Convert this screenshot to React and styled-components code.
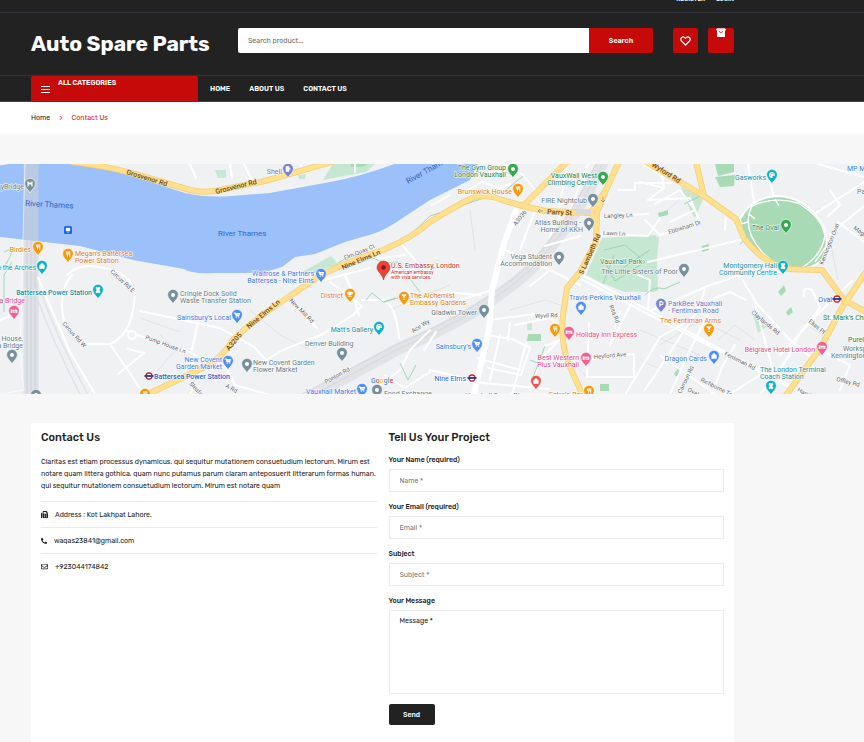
import React from "react";
import styled, { createGlobalStyle } from "styled-components";
import { FaFax, FaPhoneAlt, FaRegEnvelope } from "react-icons/fa";

const ink = "#222222";
const red = "#c60a0a";
const line = "#ebebeb";

const GlobalStyle = createGlobalStyle`
  *, *::before, *::after { box-sizing: border-box; }
  html { background: #f7f7f7; overflow: hidden; }
  body { margin: 0; font: 400 7px/12px Rubik, Inter, "Liberation Sans", sans-serif; color: ${ink}; }
  a { color: inherit; text-decoration: none; }
  h1, h2, p, ul { margin: 0; padding: 0; }
  ul { list-style: none; }
  button, input, textarea { font: inherit; }
`;

const Container = styled.div`
  margin: 0 130px 0 31px;
`;

const Header = styled.header`
  background: ${ink};
  color: #fff;
  border-bottom: 1px solid ${red};
`;

const TopBar = styled.div`
  height: 13px;
  overflow: hidden;
  border-bottom: 1px solid #32323f;
`;

const TopLinks = styled(Container)`
  display: flex;
  justify-content: flex-end;
  gap: 11px;
  margin-top: -14px;
  line-height: 26px;
  font-size: 6px;
  font-weight: 500;
`;

const Brand = styled(Container)`
  display: grid;
  grid-template-columns: 207px 1fr auto;
  align-items: start;
  height: 62px;
  padding-top: 15px;
`;

const Logo = styled.h1`
  font-size: 21px;
  line-height: 32px;
  font-weight: 700;
  white-space: nowrap;
`;

const SearchForm = styled.form`
  display: flex;
  height: 25px;
  margin-right: 20px;
  border-radius: 2px;
  overflow: hidden;
`;

const BrandActions = styled.div`
  display: flex;
  gap: 10px;
`;

const SearchInput = styled.input`
  flex: 1;
  min-width: 0;
  border: 0;
  padding: 0 10px;
  background: #fff;
  color: ${ink};
  &::placeholder { color: #6c6c6c; opacity: 1; }
`;

const SearchButton = styled.button`
  width: 64px;
  border: 0;
  background: ${red};
  color: #fff;
  font-weight: 600;
`;

const IconButton = styled.button`
  display: flex;
  justify-content: center;
  align-items: ${(p) => (p.$top ? "flex-start" : "center")};
  height: 25px;
  width: ${(p) => (p.$top ? "26px" : "25px")};
  padding: 0;
  border: 0;
  border-radius: 2px;
  background: ${red};
  color: #fff;
`;

const NavBar = styled.div`
  border-top: 1px solid #32323f;
`;

const NavInner = styled(Container)`
  display: flex;
  align-items: stretch;
  height: 25px;
`;

const Categories = styled.button`
  display: flex;
  align-items: flex-start;
  gap: 8px;
  width: 167px;
  padding: 0 10px;
  border: 0;
  border-radius: 2px 2px 0 0;
  background: ${red};
  color: #fff;
  font-weight: 600;
  line-height: 14px;
  svg { margin-top: 10px; }
`;

const Menu = styled.nav`
  display: flex;
  align-items: center;
  gap: 19px;
  padding-left: 12px;
  font-weight: 600;
`;

const Breadcrumb = styled.nav`
  background: #fff;
  height: 32px;
`;

const Crumbs = styled(Container)`
  display: flex;
  align-items: center;
  gap: 9px;
  height: 32px;
`;

const Accent = styled.span`
  color: #cf1f1f;
`;

const MapFrame = styled.div`
  margin: 30px 0 29px;
  height: 230px;
  svg { display: block; width: 100%; height: 100%; }
`;

const Card = styled.main`
  display: grid;
  grid-template-columns: 1fr 1fr;
  gap: 12px;
  margin: 0 130px 0 31px;
  padding: 7px 10px 24px;
  background: #fff;
`;

const Title = styled.h2`
  margin-bottom: ${(p) => (p.$tight ? "9px" : "10px")};
  font-size: 11px;
  line-height: 16px;
  font-weight: 500;
`;

const Intro = styled.p`
  margin-bottom: 9px;
`;

const ContactRow = styled.li`
  display: flex;
  align-items: center;
  gap: 7px;
  height: 26px;
  border-top: 1px solid ${line};
`;

const Field = styled.div`
  display: flex;
  flex-direction: column;
  gap: 4px;
  margin-bottom: 10px;
`;

const Label = styled.label`
  line-height: 10px;
  font-weight: 500;
`;

const TextInput = styled.input`
  height: 23px;
  border: 1px solid ${line};
  padding: 0 10px;
  color: ${ink};
  &::placeholder { color: #777; opacity: 1; }
`;

const MessageBox = styled.textarea`
  height: 84px;
  border: 1px solid ${line};
  padding: 4px 10px;
  resize: none;
  color: ${ink};
  &::placeholder { color: ${ink}; opacity: 1; }
`;

const SendButton = styled.button`
  width: 46px;
  height: 21px;
  border: 0;
  border-radius: 2px;
  background: ${ink};
  color: #fff;
  font-weight: 500;
`;

const MapText = styled.text`
  font-family: Roboto, sans-serif;
  font-size: ${(p) => p.$size || 7}px;
  font-weight: ${(p) => p.$weight || 400};
  fill: ${(p) => p.$color};
  stroke: #fff;
  stroke-width: ${(p) => (p.$plain ? 0 : 1)}px;
  paint-order: stroke;
`;

const gray = "#647985";
const orange = "#e27d10";
const blue = "#3b78e7";
const teal = "#12909e";
const pink = "#e8467f";
const green = "#188044";
const violet = "#6b73c4";

const pinFill = {
  gray: "#78909c",
  orange: "#f59a0c",
  blue: "#4f8ff5",
  teal: "#12b0c4",
  pink: "#f06292",
  green: "#34a853",
  violet: "#7b83cf",
  coral: "#ef5350",
};

const glyphs = {
  dot: <circle r="2" fill="#fff" />,
  fork: <path d="M-1.6-2.6v2q.1 1 1 1v2.4M-.6-2.6v3M.4-2.6v2q0 1-1 1M1.8 2.8v-5.4q-1.2 1-.9 3h.9" fill="none" stroke="#fff" strokeWidth=".8" />,
  cart: <path d="M-3-2h1.2l.9 3h2.6l.8-2.4h-3.8l.8 1.400h2.400M-.8 2.3h.1M1.7 2.3h.1" fill="none" stroke="#fff" strokeWidth="1.1" strokeLinecap="round" />,
  bag: <path d="M-2.3-.8h4.6v3.3h-4.6zM-1.2-.8v-1q1.2-1.4 2.4 0v1" fill="#fff" stroke="#fff" strokeWidth=".6" />,
  bed: <path d="M-2.8-1.8v3.8M-2.8 1h5.6v1M-1.8-.6h4.6v1.4" fill="none" stroke="#fff" strokeWidth="1.1" />,
  glass: <path d="M-2.3-2.3h4.6L0 .2zM0 0v2.3M-1.3 2.5h2.6" fill="#fff" stroke="#fff" strokeWidth=".7" />,
  cup: <path d="M-2.3-2h4v2q-2 2.5-4 0zM1.7-1.5h1v1h-1M-2.4 2.3h4.4" fill="#fff" stroke="#fff" strokeWidth=".7" />,
  column: <path d="M-2-2.6h4v1.2L1 0l1 1.2v1.5h-4V1.2L-1 0l-1-1.1z" fill="#fff" stroke="#fff" strokeWidth=".4" />,
  palette: (
    <g>
      <path d="M0-2.900A2.900 2.900 0 1 0 0 2.900Q1 2.600.5 1.500Q.6.8 1.400 1H2.400Q3 .8 2.900 0A2.900 2.900 0 0 0 0-2.900" fill="#fff" />
      <path d="M-1.500 0h.1M-.8-1.500h.1M.9-1.500h.1M1.700-.1h.1" stroke="#12b0c4" strokeWidth=".9" strokeLinecap="round" />
    </g>
  ),
  parking: <path d="M-1.1 2.8v-5.2h1.5q1.6.2 1.6 1.6T.4.8h-1.5" fill="none" stroke="#fff" strokeWidth="1.1" />,
  fuel: <path d="M-2 2.5v-5h3v5zM1-1h1v2.5" fill="#fff" stroke="#fff" strokeWidth=".6" />,
  bridge: <path d="M-2-2.5v5M2-2.5v5M-2 .3q2-1.4 4 0M-2-1h4" fill="none" stroke="#fff" strokeWidth="1.2" />,
};

const pins = [
  [30, 185, "gray", "bridge"], [38, 248, "orange", "fork"], [68, 255, "orange", "fork"],
  [42, 267, "teal", "bag"], [98, 291, "teal", "column"], [14, 312, "pink", "bed"],
  [12, 356, "gray", "dot"], [36, 396, "gray", "dot"], [173, 296, "gray", "dot"],
  [237, 316, "blue", "cart"], [228, 362, "blue", "cart"], [247, 365, "gray", "dot"],
  [145, 395, "orange", "fork"], [288, 170, "violet", "fuel"], [321, 275, "blue", "cart"],
  [350, 295, "orange", "cup"], [404, 298, "orange", "glass"], [379, 328, "teal", "palette"],
  [342, 354, "gray", "dot"], [362, 390, "blue", "cart"], [377, 391, "gray", "dot"],
  [513, 170, "green", "dot"], [518, 190, "orange", "fork"], [603, 178, "green", "dot"],
  [593, 200, "gray", "dot"], [589, 224, "gray", "dot"], [559, 258, "gray", "dot"],
  [484, 311, "gray", "dot"], [477, 345, "blue", "cart"], [581, 308, "blue", "bag"],
  [555, 330, "orange", "fork"], [569, 333, "pink", "bed"], [586, 359, "pink", "bed"],
  [536, 382, "coral", "bag"], [589, 392, "orange", "fork"], [684, 270, "gray", "dot"],
  [661, 305, "violet", "parking"], [709, 330, "orange", "glass"], [714, 357, "blue", "bag"],
  [772, 176, "teal", "palette"], [786, 226, "green", "dot"], [783, 267, "teal", "column"],
  [822, 348, "pink", "bed"], [771, 387, "teal", "column"],
];

const labels = [
  [24, 189, "yBridge", gray, "end"], [25, 206, "River Thames", "#2f66c4", "start", 3, 8],
  [218, 236, "River Thames", "#2f66c4", "start", 0, 8], [408, 184, "River Thames", "#2f66c4", "start", -29, 8],
  [31, 252, "Birdies", orange, "end"], [75, 256, "Megan's Battersea", orange], [75, 263, "Power Station", orange],
  [36, 270, "n the Arches", teal, "end"], [92, 295, "Battersea Power Station", teal, "end"],
  [25, 303, "ea Bridge", pink, "end"], [23, 341, "House,", gray, "end"], [23, 348, "a Bridge", gray, "end"],
  [180, 296, "Cringle Dock Solid", gray], [180, 303, "Waste Transfer Station", gray],
  [231, 320, "Sainsbury's Local", blue, "end"], [222, 362, "New Covent", blue, "end"],
  [222, 369, "Garden Market", blue, "end"], [154, 379, "Battersea Power Station", "#2562cc"],
  [253, 365, "New Covent Garden", gray], [253, 372, "Flower Market", gray],
  [282, 174, "Shell", violet, "end"], [314, 276, "Waitrose & Partners", blue, "end"],
  [314, 283, "Battersea - Nine Elms", blue, "end"], [343, 298, "District", orange, "end"],
  [391, 268, "U.S. Embassy, London", "#c52d25"], [391, 274, "American embassy", "#c52d25", "start", 0, 5],
  [391, 279, "with visa services", "#c52d25", "start", 0, 5],
  [410, 298, "The Alchemist", orange], [410, 305, "Embassy Gardens", orange], [373, 332, "Matt's Gallery", teal, "end"],
  [305, 346, "Denver Building", gray], [356, 394, "Vauxhall Market", blue, "end"], [384, 396, "Food Exchange", gray],
  [506, 170, "The Gym Group", green, "end"], [506, 177, "London Vauxhall", green, "end"],
  [512, 194, "Brunswick House", orange, "end"], [597, 178, "VauxWall West", green, "end"],
  [597, 185, "Climbing Centre", green, "end"], [587, 203, "FIRE Nightclub", gray, "end"],
  [581, 225, "Atlas Building -", gray, "end"], [583, 232, "Home of KKH", gray, "end"],
  [552, 259, "Vega Student", gray, "end"], [552, 266, "Accommodation", gray, "end"],
  [477, 315, "Gladwin Tower", gray, "end"], [471, 349, "Sainsbury's", blue, "end"], [466, 381, "Nine Elms", "#2562cc", "end"],
  [569, 300, "Travis Perkins Vauxhall", blue], [576, 337, "Holiday Inn Express", pink],
  [579, 360, "Best Western", pink, "end"], [579, 367, "Plus Vauxhall", pink, "end"],
  [549, 397, "Estrela Bar", orange], [545, 398, "Vauxhall Super Pharmacy", "#df4a43", "end"], [600, 264, "Vauxhall Park", "#2d8657"],
  [678, 274, "The Little Sisters of Poor", gray, "end"], [668, 306, "ParkBee Vauxhall", violet],
  [668, 313, "- Fentiman Road", violet], [660, 323, "The Fentiman Arms", orange], [707, 361, "Dragon Cards", blue, "end"],
  [766, 180, "Gasworks", teal, "end"], [779, 230, "The Oval", green, "end"], [847, 171, "MP Moran", blue],
  [777, 268, "Montgomery Hall", teal, "end"], [777, 275, "Community Centre", teal, "end"],
  [857, 194, "Park", gray], [832, 302, "Oval", "#2562cc", "end"], [823, 320, "St. Mark's Church", green],
  [848, 342, "PureGym", green], [843, 351, "Workspace", gray], [831, 358, "Kennington Park", gray],
  [815, 352, "Belgrave Hotel London", pink, "end"], [760, 372, "The London Terminal", teal], [760, 379, "Coach Station", teal],
];

const roadNames = [
  [126, 174, "Grosvenor Rd", 17, 1], [216, 194, "Grosvenor Rd", -14, 1], [343, 270, "Nine Elms Ln", -23, 1],
  [249, 329, "Nine Elms Ln", -40, 1], [229, 351, "A3205", -50, 1], [547, 214, "Parry St", 3, 1],
  [583, 275, "S Lambeth Rd", -66, 1], [651, 166, "Wyford Rd", 32, 1], [516, 226, "A3036", -51], [345, 260, "Elm Quay Ct", -22],
  [289, 301, "New Mill Rd", 45], [145, 339, "Pump House Ln", 20], [62, 324, "Circus Rd W", 48], [110, 272, "Circus Rd E", 43],
  [326, 384, "Ponton Rd", -29], [413, 333, "Ace Wy", -32], [535, 318, "Wyvil Rd", -2], [604, 218, "Langley Ln", -2],
  [603, 235, "Lawn Ln", 2], [669, 234, "Ebbisham Dr", -17], [594, 359, "Heyford Ave", -5], [724, 355, "Fentiman Rd", 27],
  [751, 313, "Claylands Rd", 40], [808, 322, "Elias Pl", 39], [700, 381, "Richborne Ter", 27], [681, 394, "Carroun Rd", -64],
  [836, 381, "Offley Rd", 14], [225, 387, "A Rd", 30], [823, 265, "Kennington Oval", -68], [853, 229, "Magee St", 35],
  [609, 306, "Rita Rd", 68], [797, 391, "Handforth Rd", 28], [189, 384, "Sleaford St", 47], [687, 391, "Oval Pl", 27],
];

const majorRoads = [
  "M72 162Q107 166 135 174L190 190Q207 194 225 189L265 181L335 161",
  "M140 398L205 367Q222 358 233 340Q257 317 290 296L318 277Q345 262 383 250Q410 239 430 222Q450 209 474 197Q488 194 502 200L523 206L545 211L592 213",
  "M523 206L545 184L567 162",
  "M619 162L606 190L597 212L596 242L580 272L567 288L563 315Q560 344 570 367L584 398",
  "M606 190L591 212L597 225",
  "M646 162L704 196L736 219L744 238Q760 260 785 269L822 270L844 300L868 313",
  "M696 162L704 196",
  "M868 269L843 306L821 347L784 398",
];

const wideRoads = [
  "M516 211L504 243L492 290L489 330L473 398",
  "M0 394L24 390L20 350L25 162",
];

const minorRoads = [
  "M67 275Q80 263 98 267Q142 272 133 310Q128 337 110 344H87Q62 335 62 305Q62 285 72 275",
  "M110 344L144 394M125 330L140 336L190 352L206 362M198 322L192 350M140 311L220 328L254 347L266 360L283 350L323 334L353 315L362 306L330 282",
  "M287 295L317 328L306 319M362 300H382Q396 303 399 338M345 275L352 290L359 315M398 240L415 260M420 300L445 292L481 295",
  "M320 281L370 268M375 259L405 255M430 330L410 350L400 370L380 385M436 332L424 350M385 375L405 388L430 372",
  "M235 337L222 360L235 385L270 395M205 362L190 394M38 278L70 352L95 394M128 349L144 353L118 374",
  "M489 320L535 314L562 315M486 335L512 339L530 348L521 375L488 368M477 358L520 370M460 381L548 389M510 323L508 340M562 337L540 360L530 390",
  "M526 344L512 395M500 335L490 380M515 325L550 318L559 326M492 290L460 300M545 346L560 340M432 205L450 195M430 370L480 382",
  "M505 250L550 270L580 285M550 270L530 286M535 210L520 250M549 237L562 213M545 246L580 236M618 190H635V183H674M601 218L625 215L648 214M601 234L648 236L660 218",
  "M579 278L864 426M582 275L650 311L735 357L800 390M589 323L587 377H634V354L592 359M650 311L708 286L740 275L800 270M645 390L698 310L706 286",
  "M733 264L757 304L790 340L814 360M755 304L775 378M740 240L648 262M648 200L690 198L700 222L660 235L645 220M706 196L726 215L725 230",
  "M660 164L664 188L648 200M640 182L664 188M748 164L754 202L738 220M771 185L774 198M816 213L864 182M830 234L864 206M838 222L864 242",
  "M780 355L820 312L852 281M790 355L760 395M830 318H864M820 350L850 365L840 390M804 296Q802 286 812 290L820 308L802 330L783 365",
  "M714 302L690 350L670 394M735 345L722 367L712 394M661 356L715 394M625 395L660 337L685 323M730 394L760 375M746 300L730 292L710 300",
  "M570 210L588 164M558 211L568 164M500 162L523 175L535 190M482 182L500 188L510 184M468 190L482 182M620 312L610 345M635 296L610 345",
  "M645 165L664 178M818 164L864 177M830 190L840 205L828 216M655 204L680 190L695 210L670 222M638 275L650 280L648 310",
  "M110 164V167M190 164L196 178M230 164L232 178M244 164L252 181M300 164L303 170M355 164V172M0 320L20 312",
];

const parks = [
  "M602 238L656 235L658 291L625 292L602 283L586 275Z",
  "M302 272L331 256L338 264L309 275Z M323 180L334 162L375 164L366 172Z",
  "M681 187L704 197L695 218L690 210Z M644 236L659 237L657 260L642 275Z M644 275L658 279L655 292H640Z",
  "M753 314L768 326L758 333Z",
  "M298 175L306 174L305 179H299Z M215 170H226V178H218Z M527 323H532V330H527Z",
];

const footpaths = [
  "M338 263L350 256L375 253L405 240L430 216L478 200L505 191L523 176",
  "M365 255L385 263L398 262M404 271L420 292M384 302L396 298M366 300L372 293L383 302L398 298",
  "M604 250L625 245L645 262L615 281L604 260M620 270L650 250M614 255L603 284",
  "M4 252Q18 244 6 264L-2 270M4 275V312M12 262L4 275M645 295Q655 285 664 289L680 282",
  "M545 346L532 380M530 360L538 363M400 363L408 380M416 365L408 380M684 204L700 196M740 244L745 240",
];

const Pin = ({ x, y, tone, icon }) => (
  <g transform={`translate(${x} ${y - 1})`}>
    <path d="M0 9C-.6 6.5-5.4 3.8-5.4-.3A5.4 5.4 0 0 1 5.4-.3C5.4 3.8.6 6.5 0 9Z" fill={pinFill[tone]} stroke="#fff" strokeWidth=".6" />
    {glyphs[icon]}
  </g>
);

const Roundel = ({ x, y }) => (
  <g transform={`translate(${x} ${y})`}>
    <circle r="3" fill="#fff" stroke="#d5202c" strokeWidth="1.3" />
    <path d="M-4.5 0h9" stroke="#173a9e" strokeWidth="1.8" />
  </g>
);

const LocationMap = () => (
  <svg viewBox="0 164 864 230" preserveAspectRatio="xMidYMid slice" role="img" aria-label="Map of Nine Elms, London">
    <rect x="-100" y="100" width="1100" height="400" fill="#eff1f3" />
    <path d="M-2 166Q12 163 30 162L70 164Q108 168 135 177L185 193Q206 198 232 196L270 193L330 182Q360 177 400 162H479L470 180Q450 190 430 200L395 223Q380 233 362 237L345 242L315 254L295 257L282 267Q265 273 245 273H215Q190 274 184 269L133 260L80 246L0 237Z" fill="#9cc0f9" />
    {parks.map((d) => <path key={d} d={d} fill="#c6e7d1" />)}
    <path d="M350 162H372L362 167H351ZM715 177L735 175L734 186L720 187ZM715 164H734V172L718 176ZM528 334H541V341H527ZM778 292L784 285L786 291L781 296ZM786 312L791 307L793 312L788 316ZM674 374L679 367L681 370L677 377ZM600 384H609V391H600ZM658 213L668 210V215L659 217ZM702 246L709 244V250L702 252Z" fill="#a8dab5" />
    <g fill="none" stroke="#e1e3e6">
      <path d="M308 398L400 348Q480 315 530 270Q570 230 603 162" strokeWidth="12" />
      <path d="M31 162V398" strokeWidth="15" stroke="#ced3d9" opacity=".55" />
      <path d="M34 290Q54 345 82 398M40 290Q60 345 90 398" strokeWidth="1.500" />
      <path d="M27 162V398M31 162V398M35 162V398" stroke="#c5cad0" strokeWidth=".7" opacity=".8" />
      <path d="M308 398L400 348Q480 315 530 270Q570 230 603 162M302 394L398 344Q477 311 526 268Q566 228 597 162" stroke="#d0d3d7" strokeWidth=".7" />
      <path d="M250 310L280 335L310 350M470 210L475 250M390 310L450 285M510 310L545 300L560 305M660 345L700 320L740 340M640 330L700 355M830 240L838 280M668 210L685 195M800 320L830 340M640 360L662 370M160 335L176 350L158 370M140 318L180 332M570 360L590 380M500 170L515 176M755 340L735 325L718 340" strokeWidth="1" />
    </g>
    <g fill="none" stroke="#fff" strokeLinecap="round" strokeLinejoin="round">
      {minorRoads.map((d) => <path key={d} d={d} strokeWidth="2" />)}
      {wideRoads.map((d, i) => <path key={d} d={d} strokeWidth={i ? 1 : 6} opacity={i ? 0.6 : 1} />)}
      <circle cx="132" cy="335" r="4" strokeWidth="2" fill="#eff1f3" />
    </g>
    <path d="M740 219Q752 197 777 196Q805 197 821 222Q832 241 822 260Q810 272 785 268Q752 254 742 232Z" fill="#a8dab5" stroke="#fff" strokeWidth="2" />
    <path d="M752 206Q774 196 798 203Q822 217 825 236Q821 257 801 268Q779 270 762 252Q741 228 752 206M748 213L755 219M741 224L748 222M815 262L827 245M775 199L779 206" fill="none" stroke="#fff" strokeWidth="1.4" />
    <g fill="none" stroke="#8fcfaa" strokeWidth=".8">{footpaths.map((d) => <path key={d} d={d} />)}</g>
    <g fill="none" strokeLinejoin="round">
      {majorRoads.map((d) => <path key={d} d={d} stroke="#f6cd72" strokeWidth="6" />)}
      {majorRoads.map((d) => <path key={d} d={d} stroke="#fee08f" strokeWidth="4.6" />)}
    </g>
    <path d="M576 212H591" stroke="#d7d9db" strokeWidth="5" />
    <path d="M538 211h5M540 209l-2 2 2 2M603 197v5M601 200l2 2 2-2" stroke="#777" strokeWidth=".6" fill="none" />
    {roadNames.map(([x, y, text, angle, strong]) => (
      <MapText key={`${text}${x}`} x={x} y={y} transform={`rotate(${angle} ${x} ${y})`} $color={strong ? "#6b4718" : "#5c6268"} $size={strong ? 7 : 6} $weight={strong ? 500 : 400} $plain={strong}>{text}</MapText>
    ))}
    {labels.map(([x, y, text, color, anchor = "start", angle = 0, size = 7]) => (
      <MapText key={`${text}${x}`} x={x} y={y} textAnchor={anchor} transform={`rotate(${angle} ${x} ${y})`} $color={color} $size={size} $weight={text === "Battersea Power Station" ? 500 : 400} $plain={size === 8}>{text}</MapText>
    ))}
    {pins.map(([x, y, tone, icon]) => <Pin key={`${x}-${y}`} x={x} y={y} tone={tone} icon={icon} />)}
    <Roundel x={149} y={376} />
    <Roundel x={472} y={378} />
    <Roundel x={837} y={299} />
    <rect x="64" y="226" width="8" height="8" rx="1.5" fill="#1a66dc" />
    <path d="M66.2 228h3.6v3h-3.6zM67 232.3h2" fill="#fff" stroke="#fff" strokeWidth=".5" />
    <path d="M383.500 280C382.500 274 377 272 377 267.500A6.500 6.500 0 0 1 390 267.500C390 272 384.500 274 383.500 280Z" fill="#ea4335" stroke="#c5221f" strokeWidth=".5" />
    <circle cx="383.500" cy="267.500" r="2.300" fill="#8c1810" />
    <MapText x="371" y="383" $size={7} $weight={500} $color="#4285f4">
      G<tspan fill="#ea4335">o</tspan><tspan fill="#fbbc04">o</tspan>g<tspan fill="#34a853">l</tspan><tspan fill="#ea4335">e</tspan>
    </MapText>
  </svg>
);

const HeartIcon = () => (
  <svg width="11" height="10" viewBox="0 0 11 10" aria-hidden="true">
    <path d="M5.500 9L1.500 5Q.2 3.200 1.400 1.700Q3.500-.1 5.500 2.200Q7.500-.1 9.600 1.700Q10.800 3.200 9.500 5Z" fill="none" stroke="#fff" strokeWidth="1.300" strokeLinejoin="round" />
  </svg>
);

const BagIcon = () => (
  <svg width="10" height="9" viewBox="0 0 10 9" aria-hidden="true">
    <path d="M1 0h8l.7 2H.3z" fill="#f5b5b5" />
    <path d="M.2 1.200h9.600v1.400H9V9H1V2.600H.2z" fill="#fff" />
    <path d="M3 3.400q2 2.600 4 0" fill="none" stroke={red} strokeWidth=".8" />
  </svg>
);

const MenuIcon = () => (
  <svg width="9" height="7" viewBox="0 0 9 7" aria-hidden="true">
    <path d="M0 .5h9M0 3.500h9M0 6.500h9" stroke="#fff" />
  </svg>
);

const fields = [
  ["name", "Your Name (required)", "Name *", "text"],
  ["email", "Your Email (required)", "Email *", "email"],
  ["subject", "Subject", "Subject *", "text"],
];

export default function App() {
  return (
    <>
      <GlobalStyle />
      <Header>
        <TopBar>
          <TopLinks>
            <a href="#register">REGISTER</a>
            <a href="#login">LOGIN</a>
          </TopLinks>
        </TopBar>
        <Brand>
          <Logo>Auto Spare Parts</Logo>
          <SearchForm onSubmit={(e) => e.preventDefault()}>
            <SearchInput aria-label="Search product" placeholder="Search product..." />
            <SearchButton>Search</SearchButton>
          </SearchForm>
          <BrandActions>
            <IconButton aria-label="Wishlist"><HeartIcon /></IconButton>
            <IconButton aria-label="Cart" $top><BagIcon /></IconButton>
          </BrandActions>
        </Brand>
        <NavBar>
          <NavInner>
            <Categories><MenuIcon />ALL CATEGORIES</Categories>
            <Menu aria-label="Main">
              <a href="#home">HOME</a>
              <a href="#about">ABOUT US</a>
              <a href="#contact">CONTACT US</a>
            </Menu>
          </NavInner>
        </NavBar>
      </Header>
      <Breadcrumb aria-label="Breadcrumb">
        <Crumbs>
          <a href="#home">Home</a>
          <Accent>&gt;</Accent>
          <Accent>Contact Us</Accent>
        </Crumbs>
      </Breadcrumb>
      <MapFrame><LocationMap /></MapFrame>
      <Card>
        <section>
          <Title>Contact Us</Title>
          <Intro>
            Claritas est etiam processus dynamicus, qui sequitur mutationem consuetudium lectorum. Mirum est notare quam littera gothica, quam nunc putamus parum claram anteposuerit litterarum formas human. qui sequitur mutationem consuetudium lectorum. Mirum est notare quam
          </Intro>
          <ul>
            <ContactRow><FaFax />Address : Kot Lakhpat Lahore.</ContactRow>
            <ContactRow><FaPhoneAlt size={6} />waqas23841@gmail.com</ContactRow>
            <ContactRow><FaRegEnvelope />+923044174842</ContactRow>
          </ul>
        </section>
        <form onSubmit={(e) => e.preventDefault()}>
          <Title $tight>Tell Us Your Project</Title>
          {fields.map(([id, label, hint, type]) => (
            <Field key={id}>
              <Label htmlFor={id}>{label}</Label>
              <TextInput id={id} type={type} placeholder={hint} />
            </Field>
          ))}
          <Field>
            <Label htmlFor="message">Your Message</Label>
            <MessageBox id="message" placeholder="Message *" />
          </Field>
          <SendButton>Send</SendButton>
        </form>
      </Card>
    </>
  );
}
